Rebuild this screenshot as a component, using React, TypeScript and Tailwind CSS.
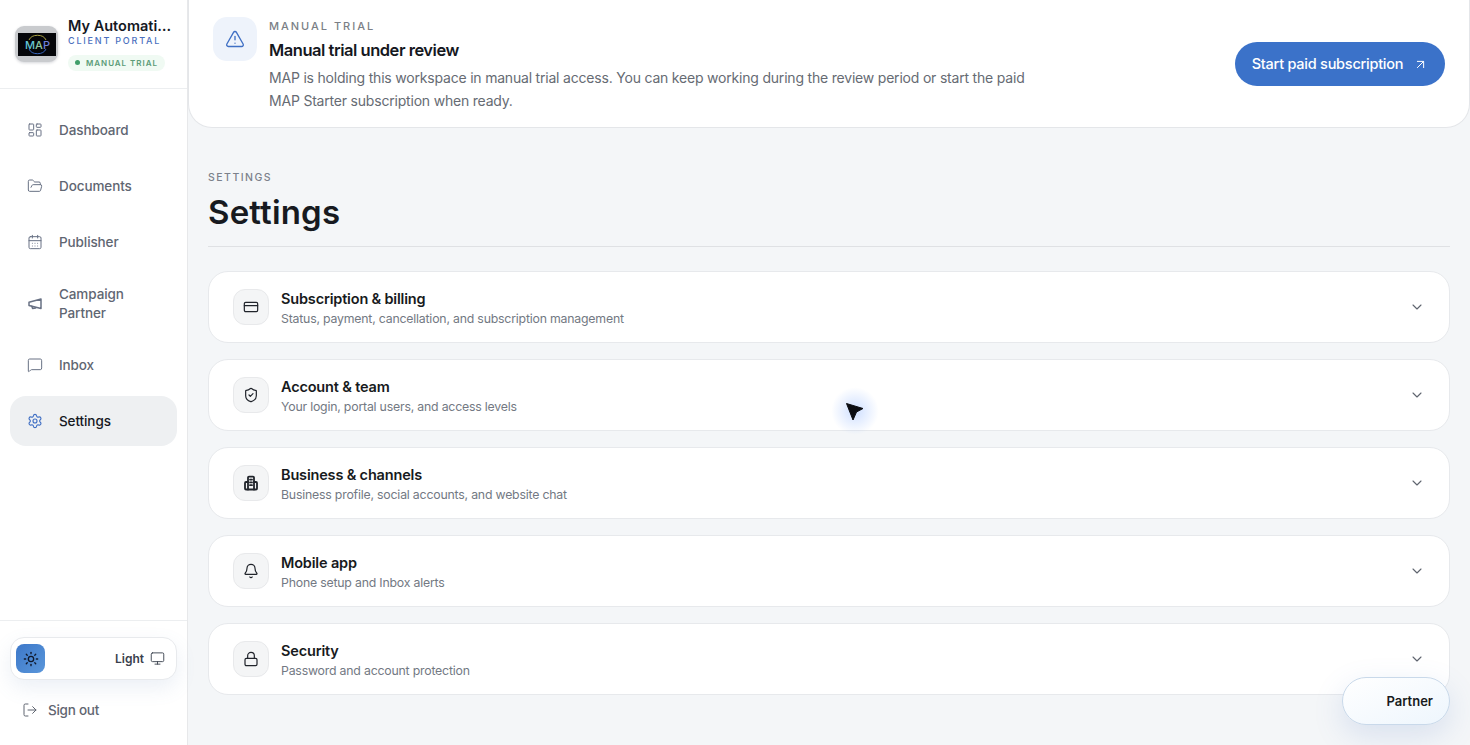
import {
    ArrowUpRight,
    Bell,
    CalendarDays,
    ChevronDown,
    CreditCard,
    FolderOpen,
    LayoutDashboard,
    Lock,
    LogOut,
    MessageSquare,
    Monitor,
    Settings,
    ShieldCheck,
    Sun,
    TriangleAlert,
} from "lucide-react";

const font = { fontFamily: "Inter, 'Liberation Sans', sans-serif" };

type IconProps = { size?: number; strokeWidth?: number; className?: string };

function CampaignIcon({ size = 16, strokeWidth = 1.5, className }: IconProps) {
    return (
        <svg width={size} height={size} viewBox="0 0 16 16" fill="none" stroke="currentColor" strokeWidth={strokeWidth} strokeLinejoin="round" strokeLinecap="round" className={className}>
            <path d="M2 6.2 14 3v9.6L2 9.6Z" />
            <path d="M4.8 10.2 5.6 12.4 8.6 12" />
        </svg>
    );
}

function BusinessIcon({ size = 16, strokeWidth = 1.7, className }: IconProps) {
    return (
        <svg width={size} height={size} viewBox="0 0 16 16" fill="none" stroke="currentColor" strokeWidth={strokeWidth} strokeLinejoin="round" strokeLinecap="round" className={className}>
            <path d="M5 14.5V2.6a1 1 0 0 1 1-1h4a1 1 0 0 1 1 1v11.9" />
            <path d="M7 4.6h2M7 7.4h2M7 10.2h2" />
            <path d="M5 7H3a1 1 0 0 0-1 1v5.5a1 1 0 0 0 1 1h10a1 1 0 0 0 1-1V8a1 1 0 0 0-1-1h-2" />
        </svg>
    );
}

const navItems = [
    { label: "Dashboard", icon: LayoutDashboard },
    { label: "Documents", icon: FolderOpen },
    { label: "Publisher", icon: CalendarDays },
    { label: "Campaign Partner", icon: CampaignIcon },
    { label: "Inbox", icon: MessageSquare },
    { label: "Settings", icon: Settings, active: true },
];

const sections = [
    {
        title: "Subscription & billing",
        description: "Status, payment, cancellation, and subscription management",
        icon: CreditCard,
    },
    {
        title: "Account & team",
        description: "Your login, portal users, and access levels",
        icon: ShieldCheck,
    },
    {
        title: "Business & channels",
        description: "Business profile, social accounts, and website chat",
        icon: BusinessIcon,
    },
    {
        title: "Mobile app",
        description: "Phone setup and Inbox alerts",
        icon: Bell,
    },
    {
        title: "Security",
        description: "Password and account protection",
        icon: Lock,
    },
];

function Logo() {
    return (
        <div className="flex h-[36px] w-[43px] shrink-0 items-center justify-center rounded-[9px] bg-[#c9cbce] shadow-[0_1px_3px_rgba(15,23,42,0.18)]">
            <svg width="38" height="23" viewBox="0 0 38 23">
                <rect width="38" height="23" fill="#05060a" />
                <path d="M11 7a9 7 0 0 1 17 0" fill="none" stroke="#b9b04a" strokeWidth="0.9" />
                <path d="M11 16a9 7 0 0 0 17 0" fill="none" stroke="#3d6fd0" strokeWidth="0.9" />
                <text x="19.5" y="15.5" textAnchor="middle" fontSize="11" fontWeight="500" fontFamily="Inter, sans-serif">
                    <tspan fill="#63c6d6">M</tspan>
                    <tspan fill="#8fc7a0">A</tspan>
                    <tspan fill="#6f7fd8">P</tspan>
                </text>
            </svg>
        </div>
    );
}

function Sidebar() {
    return (
        <aside className="flex h-[745px] w-[188px] shrink-0 flex-col border-r border-[#e7e8ea] bg-white">
            <div className="flex h-[89px] shrink-0 items-center gap-[10px] border-b border-[#eceef0] pl-[15px] pr-[14px]">
                <Logo />
                <div className="min-w-0 flex-1">
                    <div className="truncate text-[14.5px] font-semibold leading-[18px] text-[#14181f]">My Automation Partner</div>
                    <div className="text-[9px] font-medium leading-[12px] tracking-[0.2em] text-[#4a6fbe]">CLIENT PORTAL</div>
                    <div className="mt-[5px] inline-flex h-[16px] items-center gap-[6px] rounded-full bg-[#f0faf3] px-[7px] text-[8px] font-semibold tracking-[0.12em] text-[#5b9c78]">
                        <span className="h-[5px] w-[5px] rounded-full bg-[#3f9e69]" />
                        MANUAL TRIAL
                    </div>
                </div>
            </div>

            <nav className="flex flex-1 flex-col gap-[6px] px-[10px] pt-[16px]">
                {navItems.map((item) => (
                    <div
                        key={item.label}
                        className={
                            "flex min-h-[50px] items-center gap-[16px] rounded-[16px] py-[11.5px] pl-[17px] pr-[20px] " +
                            (item.active ? "bg-[#eef0f2] text-[#16191f]" : "text-[#5f6672]")
                        }
                    >
                        <item.icon
                            size={16}
                            strokeWidth={item.active ? 1.7 : 1.5}
                            className={item.active ? "shrink-0 text-[#3f6fc4]" : "shrink-0 text-[#687184]"}
                        />
                        <span className="text-[13.5px] font-medium leading-[19px] tracking-[-0.1px]">{item.label}</span>
                    </div>
                ))}
            </nav>

            <div className="h-[125px] border-t border-[#eceef0] px-[10px] pt-[16px]">
                <div className="flex h-[43px] items-center justify-between rounded-[14px] border border-[#e8eaed] bg-white pl-[5px] pr-[11px] shadow-[0_8px_20px_rgba(100,130,180,0.12)]">
                    <div className="flex h-[29px] w-[29px] items-center justify-center rounded-[8px] bg-gradient-to-br from-[#3d78c9] to-[#5a96da]">
                        <Sun size={16} strokeWidth={2} className="text-[#10192c]" />
                    </div>
                    <div className="flex items-center gap-[6px]">
                        <span className="text-[12px] font-semibold text-[#3a404c]">Light</span>
                        <Monitor size={15} strokeWidth={1.5} className="text-[#3f4652]" />
                    </div>
                </div>
                <div className="mt-[20px] flex items-center gap-[10px] pl-[12px] text-[#5f6570]">
                    <LogOut size={16} strokeWidth={1.5} />
                    <span className="text-[13.5px] font-medium leading-[20px] tracking-[-0.25px]">Sign out</span>
                </div>
            </div>
        </aside>
    );
}

function TrialBanner() {
    return (
        <section className="-mt-px flex h-[129px] items-center justify-between rounded-b-[24px] border border-t-0 border-[#e4e6e9] bg-white px-[24px]">
            <div className="flex gap-[12px] self-start pt-[18px]">
                <div className="flex h-[44px] w-[44px] shrink-0 items-center justify-center rounded-[14px] bg-[#eef3fb]">
                    <TriangleAlert size={20} strokeWidth={1.6} className="text-[#3f6fc4]" />
                </div>
                <div className="pt-px">
                    <div className="text-[11px] font-medium leading-[16px] tracking-[0.18em] text-[#7b7f86]">MANUAL TRIAL</div>
                    <div className="mt-[4px] text-[16.5px] font-semibold leading-[24px] tracking-[-0.47px] text-[#15181e]">Manual trial under review</div>
                    <p className="mt-[4px] w-[770px] text-[14px] leading-[23px] tracking-[-0.2px] text-[#666b73]">
                        MAP is holding this workspace in manual trial access. You can keep working during the review period or start the paid
                        MAP Starter subscription when ready.
                    </p>
                </div>
            </div>
            <button className="mt-[2px] flex h-[44px] w-[210px] shrink-0 items-center justify-center gap-[10px] rounded-full bg-[#3b72c9] text-[14.5px] font-medium tracking-[-0.25px] text-white">
                Start paid subscription
                <ArrowUpRight size={15} strokeWidth={1.6} />
            </button>
        </section>
    );
}

function SectionCard({ title, description, icon: Icon }: (typeof sections)[number]) {
    return (
        <div className="flex h-[72px] items-center rounded-[20px] border border-[#e7e9ec] bg-white px-[24px]">
            <div className="flex h-[36px] w-[36px] shrink-0 items-center justify-center rounded-[12px] border border-[#e8e9eb] bg-[#f4f5f6]">
                <Icon size={16} strokeWidth={1.8} className="text-[#20242b]" />
            </div>
            <div className="ml-[12px] flex-1 pt-[3px]">
                <div className="text-[14.5px] font-semibold leading-[20px] tracking-[-0.17px] text-[#171a20]">{title}</div>
                <div className="mt-px text-[12.3px] leading-[18px] tracking-[-0.2px] text-[#737983]">{description}</div>
            </div>
            <ChevronDown size={16} strokeWidth={1.6} className="text-[#5e646e]" />
        </div>
    );
}

export default function App() {
    return (
        <div style={font} className="relative flex h-[745px] w-[1470px] overflow-hidden bg-[#f4f6f8]">
            <Sidebar />
            <main className="min-w-0 flex-1">
                <TrialBanner />
                <div className="px-[20px] pt-[42px]">
                    <div className="border-b border-[#dfe1e4] pb-[14px]">
                        <div className="text-[10.5px] font-medium leading-[16px] tracking-[0.14em] text-[#7b818b]">SETTINGS</div>
                        <h1 className="mt-[6px] text-[33px] font-semibold leading-[40px] tracking-[0.17px] text-[#171a20]">Settings</h1>
                    </div>
                    <div className="mt-[24px] flex flex-col gap-[16px]">
                        {sections.map((section) => (
                            <SectionCard key={section.title} {...section} />
                        ))}
                    </div>
                </div>
            </main>

            {/* floating partner button */}
            <div className="absolute left-[1342px] top-[677px] flex h-[48px] w-[108px] items-center justify-end rounded-full border border-[#c9d9ea] bg-gradient-to-br from-white to-[#eef6fd] pr-[16px] pt-px shadow-[0_10px_30px_rgba(90,130,200,0.18)]">
                <span className="text-[13px] font-semibold text-[#171a20]">Partner</span>
            </div>

            {/* cursor */}
            <div className="absolute left-[831px] top-[387px] h-[48px] w-[48px] rounded-full bg-[radial-gradient(circle,rgba(96,150,255,0.3),rgba(96,150,255,0)_70%)]" />
            <svg className="absolute left-[845px] top-[402px]" width="20" height="20" viewBox="0 0 20 20">
                <path d="M1.5 1.5 L18 6.5 L11.5 10 L8 18 Z" fill="#0b0d12" stroke="#0b0d12" strokeLinejoin="round" />
            </svg>
        </div>
    );
}
